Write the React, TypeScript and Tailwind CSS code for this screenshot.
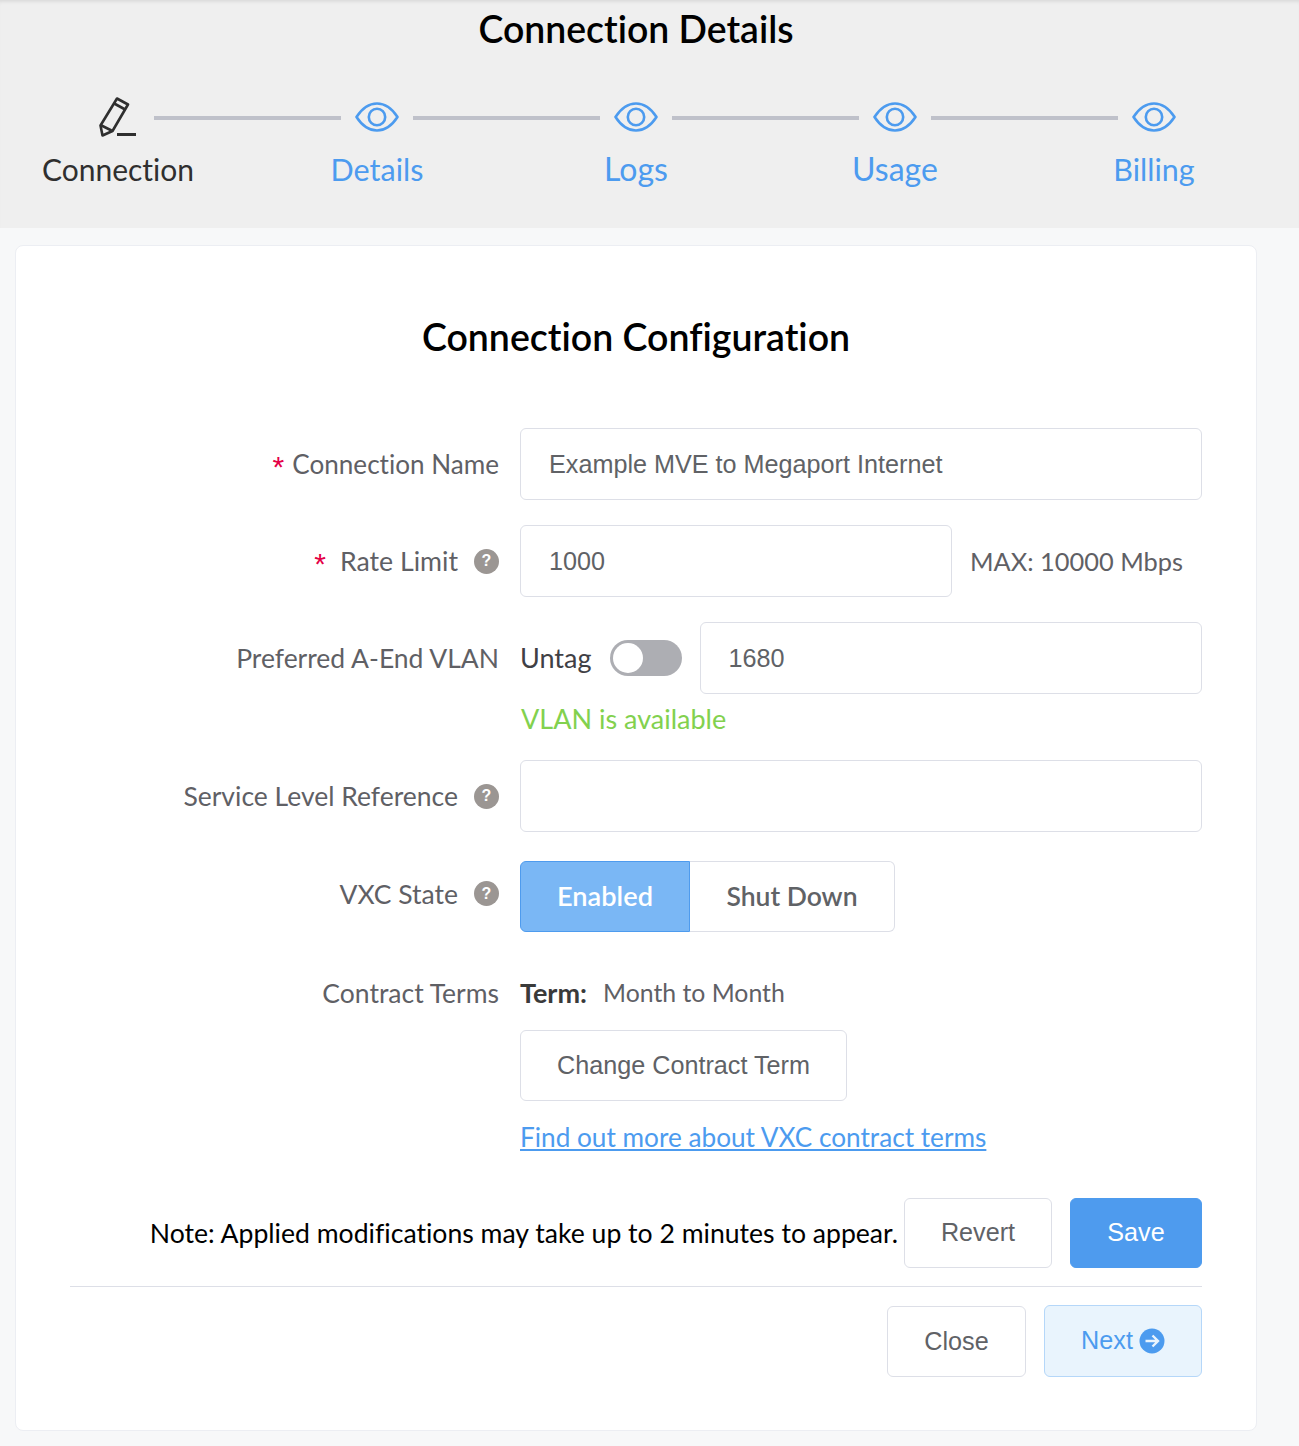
import React from 'react'

const MULI = 'font-["Lato","Noto_Sans",sans-serif]'

const EyeIcon = () => (
    <svg width="44" height="30" viewBox="0 0 44 30" fill="none" stroke="#4c9bef" strokeWidth="2.6">
        <path d="M1.5 15 C7 6.5 14 1.5 22 1.5 C30 1.5 37 6.5 42.5 15 C37 23.5 30 28.5 22 28.5 C14 28.5 7 23.5 1.5 15 Z" strokeLinejoin="round" />
        <circle cx="22" cy="15" r="8.2" />
    </svg>
)

const PencilIcon = () => (
    <svg width="38" height="42" viewBox="0 0 38 42" fill="none" stroke="#2f2f2f" strokeWidth="2.6" strokeLinejoin="round">
        <path d="M18 1.5 L29 7.5 L13.5 34 L3.5 38.5 L1.5 28.5 Z" />
        <path d="M15.2 6.5 L26.2 12.5" />
        <path d="M2.5 28.5 L12.5 33.5" />
        <path d="M18 37.5 H37" strokeWidth="3" />
    </svg>
)

const HelpDot = () => (
    <span className='flex h-[25px] w-[25px] items-center justify-center rounded-full bg-[#9b9693] font-["Liberation_Sans",sans-serif] text-[16px] font-bold text-white'>?</span>
)

const Label = ({ children, help, req, className = 'text-[26.5px]', textClass = 'pt-[2px]' }: { children: React.ReactNode; help?: boolean; req?: boolean; className?: string; textClass?: string }) => (
    <div className={'flex w-[429px] shrink-0 items-center justify-end text-[#5f6065] ' + className}>
        {req && <span className={'pt-[5px] font-["Liberation_Sans",sans-serif] text-[30px] text-[#e40046] ' + (help ? 'mr-[14px]' : 'mr-[8px]')}>*</span>}
        <span className={textClass}>{children}</span>
        {help && <span className="ml-[16px]"><HelpDot /></span>}
    </div>
)

const TextBox = ({ value, className }: { value?: string; className: string }) => (
    <div className={'flex h-[72px] items-center rounded-[6px] border border-[#dddfe7] bg-white pt-[2px] font-["Liberation_Sans",sans-serif] text-[25.2px] text-[#606266] ' + className}>
        {value}
    </div>
)

const Btn = ({ children, className }: { children: React.ReactNode; className: string }) => (
    <div className={'flex items-center justify-center rounded-[6px] border font-["Liberation_Sans",sans-serif] text-[25.2px] ' + className}>
        {children}
    </div>
)

const steps = [
    { name: 'Connection', size: 'text-[30px] text-[#2f2f2f]' },
    { name: 'Details', size: 'text-[30.5px] text-[#4c9bef]' },
    { name: 'Logs', size: 'text-[32px] text-[#4c9bef]' },
    { name: 'Usage', size: 'text-[32px] text-[#4c9bef]' },
    { name: 'Billing', size: 'text-[30.5px] text-[#4c9bef]' },
]

export default function App() {
    return (
        <div className={'min-h-[1446px] w-[1299px] bg-[#f7f8f9] text-[27px] [font-variant-ligatures:none] ' + MULI}>
            {/* Header */}
            <div className="h-[228px] bg-[#efefef] pl-[82px] shadow-[inset_0_4px_4px_-3px_rgba(0,0,0,0.12)]">
                <h2 className="ml-[-82px] w-[1272px] pt-[6px] text-center text-[37.4px] leading-[45px] font-semibold text-black">Connection Details</h2>
                <div className="mt-[46px] flex h-[42px] items-center">
                    {steps.map((s, i) => (
                        <React.Fragment key={s.name}>
                            <div className={'flex w-[72px] justify-center ' + (i === 0 ? '' : 'pb-[2px]')}>{i === 0 ? <PencilIcon /> : <EyeIcon />}</div>
                            {i < 4 && <div className="h-[4px] w-[187px] bg-[#bfc1ca]" />}
                        </React.Fragment>
                    ))}
                </div>
                <div className="mt-[10px] flex h-[40px] gap-[187px] leading-[40px]">
                    {steps.map((s) => (
                        <div key={s.name} className={'flex w-[72px] justify-center whitespace-nowrap ' + s.size}>{s.name}</div>
                    ))}
                </div>
            </div>

            {/* Card */}
            <div className="mx-[15px] mt-[17px] h-[1186px] w-[1242px] rounded-[8px] border border-[#eceef3] bg-white pr-[54px] pl-[54px]">
                <h3 className="pt-[67px] text-center text-[37.5px] leading-[48px] font-semibold text-black">Connection Configuration</h3>

                <div className="mt-[67px] flex h-[72px] gap-[21px]">
                    <Label req className="text-[26.1px]">Connection Name</Label>
                    <TextBox value="Example MVE to Megaport Internet" className="flex-1 pl-[28px]" />
                </div>

                <div className="mt-[25px] flex h-[72px] gap-[21px]">
                    <Label req help className="text-[26.7px]" textClass="">Rate Limit</Label>
                    <TextBox value="1000" className="w-[432px] pl-[28px]" />
                    <span className="ml-[-3px] self-center text-[25.4px] whitespace-nowrap text-[#5f6065]">MAX: 10000 Mbps</span>
                </div>

                <div className="mt-[25px] flex h-[72px] gap-[21px]">
                    <Label>Preferred A-End VLAN</Label>
                    <div className="flex flex-1 items-center">
                        <span className="text-[#3f4045]">Untag</span>
                        <span className="ml-[19px] flex h-[36px] w-[72px] items-center rounded-full bg-[#adaeb3] pl-[3px]">
                            <span className="h-[30px] w-[30px] rounded-full bg-white" />
                        </span>
                        <TextBox value="1680" className="ml-[18px] flex-1 pl-[27px]" />
                    </div>
                </div>
                <div className="ml-[451px] flex h-[50px] items-center text-[#82d14e]">VLAN is available</div>

                <div className="mt-[16px] flex h-[72px] gap-[21px]">
                    <Label help>Service Level Reference</Label>
                    <TextBox className="flex-1" />
                </div>

                <div className="mt-[29px] flex h-[71px] gap-[21px]">
                    <div className="mt-[-4px]"><Label help textClass="pt-[1px]"><span className="leading-[72px]">VXC State</span></Label></div>
                    <div className='flex font-["Lato",sans-serif]'>
                        <div className='flex h-[71px] w-[170px] items-center justify-center rounded-l-[6px] border border-[#4e9bee] bg-[#7ab7f5] text-[27.2px] font-semibold text-white'>Enabled</div>
                        <div className='flex h-[71px] w-[205px] items-center justify-center rounded-r-[6px] border border-l-0 border-[#dddfe7] text-[26.5px] font-semibold text-[#606266]'>Shut Down</div>
                    </div>
                </div>

                <div className="mt-[39px] flex h-[44px] items-center gap-[21px]">
                    <Label>Contract Terms</Label>
                    <div className="flex items-center whitespace-nowrap">
                        <span className="font-bold text-[#3a3a3a]">Term:</span>
                        <span className="ml-[16px] text-[24.8px] text-[#5f6065]">Month to Month</span>
                    </div>
                </div>
                <div className="mt-[15px] ml-[450px]">
                    <Btn className="h-[71px] w-[327px] border-[#dddfe7] text-[#606266]">Change Contract Term</Btn>
                    <a href="#" className="mt-[16px] block text-[26.2px] leading-[40px] whitespace-nowrap text-[#4c9bef] underline">Find out more about VXC contract terms</a>
                </div>

                {/* Footer actions */}
                <div className="mt-[41px] flex h-[70px] items-center justify-end">
                    <span className="mr-[6px] pt-[2px] text-[26.6px] whitespace-nowrap text-black">Note: Applied modifications may take up to 2 minutes to appear.</span>
                    <Btn className="h-[70px] w-[148px] border-[#dddfe7] text-[#606266]">Revert</Btn>
                    <Btn className="ml-[18px] h-[70px] w-[132px] border-[#4e9bee] bg-[#4e9bee] text-white">Save</Btn>
                </div>
                <div className="mt-[18px] h-px bg-[#dddfe7]" />
                <div className="mt-[18px] flex items-center justify-end">
                    <Btn className="mt-[1px] h-[71px] w-[139px] border-[#dddfe7] text-[#606266]">Close</Btn>
                    <Btn className="ml-[18px] h-[72px] w-[158px] border-[#b5d7f9] bg-[#e9f4fd] text-[#4c9bef]">
                        Next
                        <svg className="ml-[6px]" width="26" height="26" viewBox="0 0 26 26">
                            <circle cx="13" cy="13" r="12.5" fill="#4c9bef" />
                            <path d="M6.5 13 H19 M13.5 7.5 L19 13 L13.5 18.5" fill="none" stroke="#e9f4fd" strokeWidth="2.4" />
                        </svg>
                    </Btn>
                </div>
            </div>
        </div>
    )
}
